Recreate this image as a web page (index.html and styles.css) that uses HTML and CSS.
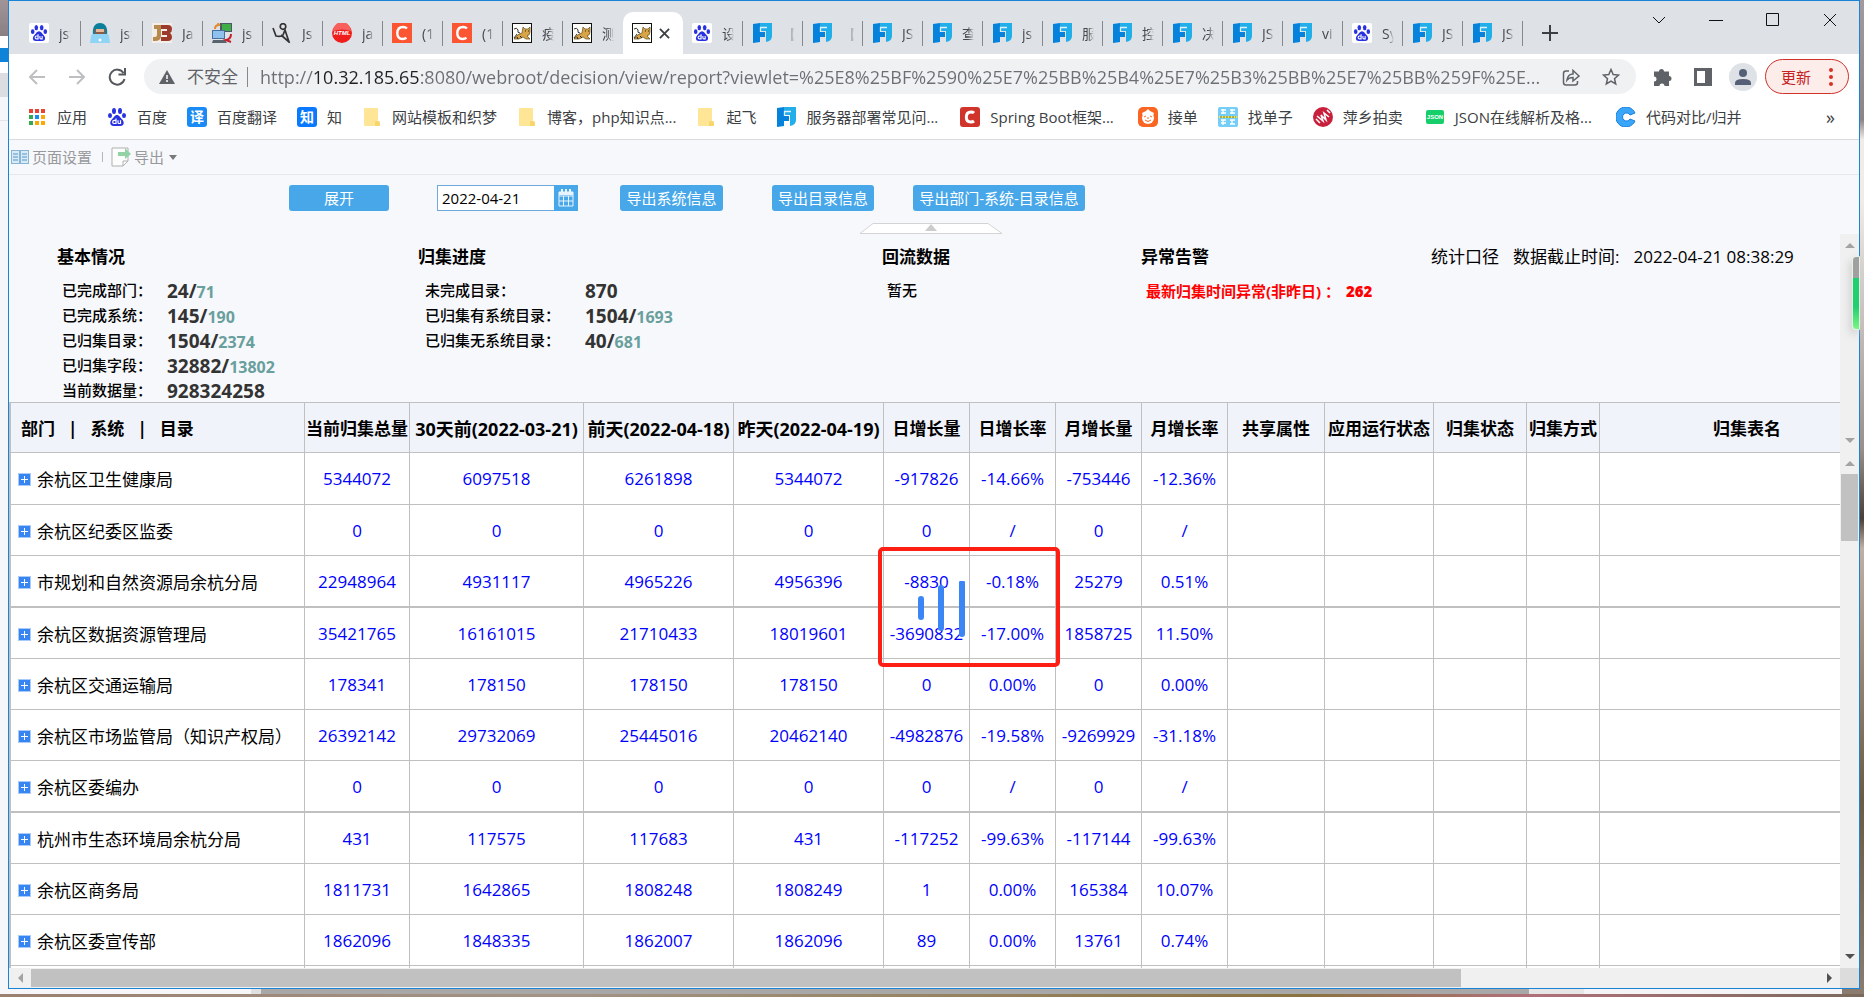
FILE: index.html
```html
<!DOCTYPE html>
<html lang="zh-CN">
<head>
<meta charset="utf-8">
<title>归集统计</title>
<link rel="stylesheet" href="styles.css">
</head>
<body>

<!-- icons -->
<svg class="sprite" aria-hidden="true">
  <symbol id="paw" viewBox="0 0 20 20">
    <g fill="#2932e1">
      <ellipse cx="7" cy="4" rx="2" ry="3"/><ellipse cx="13" cy="4" rx="2" ry="3"/>
      <ellipse cx="3" cy="8.500" rx="2" ry="2.600"/><ellipse cx="17" cy="8.500" rx="2" ry="2.600"/>
      <path d="M10 8c2.500 0 3 2.500 5 4.300 2.800 2.600 2.200 6.700-1.500 6.700h-7c-3.700 0-4.300-4.100-1.500-6.700C7 10.500 7.500 8 10 8z"/>
    </g>
    <path d="M9 11.500v5H7.300a1.300 1.300 0 0 1 0-3.200H9M11 13.300v2.200q0 1 1 1h1.500v-3.200" fill="none" stroke="#fff" stroke-width="1.200"/>
  </symbol>
  <symbol id="baidu" viewBox="0 0 20 20"><rect width="20" height="20" rx="2" fill="#fff"/><use href="#paw" x="1" y="1" width="18" height="18"/></symbol>
  <symbol id="hacker" viewBox="0 0 20 20">
    <path d="M3 12C2 4 5 0 10 0s8 4 7 12z" fill="#0d7f9c"/><path d="M5 6h10v5q-5 4-10 0z" fill="#8b5a48"/><path d="M6 6h8v3H6z" fill="#e8b795"/>
    <path d="M0 20l1-7q0-2 2-2h14q2 0 2 2l1 7z" fill="#8fd3f5"/><circle cx="10" cy="17" r="1.500" fill="#fff"/>
  </symbol>
  <symbol id="jb" viewBox="0 0 20 20"><rect width="20" height="20" fill="#f3eee9"/>
    <path d="M2 2h7v11q0 5-6 5H1v-4h2q2 0 2-2V6H2z" fill="#b98a4e"/>
    <path d="M9 2h7q4 0 4 4 0 3-2 4 2 1 2 4 0 4-4 4H9v-4h6V12h-5V8h5V6H9z" fill="#9c3a2c"/>
  </symbol>
  <symbol id="pcs" viewBox="0 0 20 20">
    <path d="M8 0h12v9H8z" fill="#4b5a66"/><path d="M10 1h9v7h-9z" fill="#3fae49"/><path d="M0 7h13v9H0z" fill="#4a6f9c"/><path d="M1 8h11v7H1z" fill="#8fc1ef"/>
    <path d="M1 17h12l2 3H0z" fill="#59636d"/><path d="M3 6q0-4 4-4l-1-2" stroke="#e28a2b" stroke-width="2" fill="none"/><path d="M19 11q0 5-5 6l5 2" stroke="#c3202b" stroke-width="2" fill="none"/>
  </symbol>
  <symbol id="runner" viewBox="0 0 20 20"><g fill="none" stroke="#333" stroke-width="1.700"><circle cx="11" cy="3.500" r="2.800"/><path d="M1 5l3 8q5 1 7-1l2-5 4 12-8-7"/></g></symbol>
  <symbol id="html" viewBox="0 0 20 20"><circle cx="10" cy="10" r="10" fill="#f01d1d"/><path d="M1 8a9 9 0 0 1 18 0q-9-3-18 0z" fill="#f7605c"/><text x="10" y="12" text-anchor="middle" class="t-html">HTML</text></symbol>
  <symbol id="csdn" viewBox="0 0 20 20"><rect width="20" height="20" fill="#fc5531"/><path d="M15 5.500q-1.500-1.500-4-1.500-5.500 0-5.700 6 0 6 5.200 6 2.500 0 4-1.200" fill="none" stroke="#fff" stroke-width="2.400"/></symbol>
  <symbol id="csdn2" viewBox="0 0 20 20"><rect width="20" height="20" rx="3" fill="#d0342a"/><path d="M14 6q-1-1-3-1-4.500 0-4.700 5 0 5 4.500 5 2 0 3.200-1" fill="none" stroke="#fff" stroke-width="3"/></symbol>
  <symbol id="tomcat" viewBox="0 0 20 20"><rect x=".5" y=".5" width="19" height="19" fill="#fdfdfa" stroke="#111"/>
    <path d="M2 16q3-5 8-6l1-6 2 2h3l2-2v5q0 3-3 4l3 3h-4l-3-2-4 2z" fill="#d8a445" stroke="#4b3510" stroke-width=".6"/>
    <path d="M2 6q3-2 4 1-1 3 2 3M5 11l-3 4" stroke="#333" fill="none"/><path d="M13 8h1M16 8h1M8 13l2 2M5 14l1 2" stroke="#222"/>
  </symbol>
  <symbol id="fr" viewBox="0 0 20 20"><path d="M1 1l7-1v9h5v5H8v5l-7 1z" fill="#0582dc"/><path d="M8 0h12v13q0 5-6 6V8H8z" fill="#22aee9"/><path d="M8.500 9V4.500H15" fill="none" stroke="#dff2fc" stroke-width="1.300"/></symbol>
  <symbol id="folder" viewBox="0 0 20 20"><path d="M2 2q0-1 1-1h12q1 0 1 1v12l2 1v3q0 1-1 1H3q-1 0-1-1z" fill="#ffe596"/><path d="M13 19v-4q0-1 1-1h2q2 0 2 2v2q0 1-1 1z" fill="#f8d66d"/></symbol>
  <symbol id="apps" viewBox="0 0 20 20">
    <path d="M2 2h4v4H2zM8 2h4v4H8zM14 2h4v4h-4z" fill="#ea4335"/><path d="M2 8h4v4H2zM2 14h4v4H2z" fill="#34a853"/>
    <path d="M8 8h4v4H8z" fill="#1a8cf0"/><path d="M14 8h4v4h-4zM8 14h4v4H8zM14 14h4v4h-4z" fill="#fbaa05"/>
  </symbol>
  <symbol id="yi" viewBox="0 0 20 20"><rect width="20" height="20" rx="3" fill="#1a8bf5"/><text x="10" y="15" text-anchor="middle" class="t-cjk">译</text></symbol>
  <symbol id="zhi" viewBox="0 0 20 20"><rect width="20" height="20" rx="3" fill="#0a79ff"/><text x="10" y="15" text-anchor="middle" class="t-cjk">知</text></symbol>
  <symbol id="pig" viewBox="0 0 20 20"><rect width="20" height="20" rx="5" fill="#fb6522"/><circle cx="10" cy="11" r="6" fill="#fff"/><path d="M4 6l4-2 2-2 2 2 4 2-1 3H5z" fill="#fff"/><path d="M6 10l2-1M12 9l2 1M7 13q3 3 6 0M9 11h2" stroke="#fb6522" fill="none"/></symbol>
  <symbol id="city" viewBox="0 0 20 20"><rect width="20" height="20" rx="2" fill="#76cdf5"/><path d="M3 3h5M5 2v5M3 6h5M12 3h5M14 2v5M12 6h5M3 13h5M3 16h5M5 13v5M12 13h5M12 17h5M14 13v4" stroke="#fff" stroke-width="1.300"/><path d="M1 9h18v2H1z" fill="#f5e24c"/><path d="M2 10h16" stroke="#5b7d52" stroke-dasharray="2 1"/></symbol>
  <symbol id="px" viewBox="0 0 20 20"><circle cx="10" cy="10" r="10" fill="#c8203c"/><path d="M3 12l4 4M4 9l6 5-2-6 5 5-2-7 5 4M14 3l3 3" stroke="#fff" stroke-width="1.500" fill="none"/></symbol>
  <symbol id="json" viewBox="0 0 20 20"><rect x="1" y="3" width="18" height="14" rx="2" fill="#16cf6a"/><text x="10" y="12" text-anchor="middle" class="t-json">JSON</text></symbol>
  <symbol id="cc" viewBox="0 0 20 20"><path d="M19 6A10 10 0 1 0 19 14L14 12a4 4 0 1 1 0-4z" fill="#3aa6fb" stroke="#1b7fd6"/></symbol>
</svg>

<div class="window">

  <div class="tabstrip">
    <div class="tabs" role="tablist">
      <button class="tab first" role="tab"><svg class="ico"><use href="#baidu"/></svg><span>jsf</span></button>
      <button class="tab second" role="tab"><svg class="ico"><use href="#hacker"/></svg><span>jsf</span></button>
      <button class="tab" role="tab"><svg class="ico"><use href="#jb"/></svg><span>Ja</span></button>
      <button class="tab" role="tab"><svg class="ico"><use href="#pcs"/></svg><span>js</span></button>
      <button class="tab" role="tab"><svg class="ico"><use href="#runner"/></svg><span>Js</span></button>
      <button class="tab" role="tab"><svg class="ico"><use href="#html"/></svg><span>ja</span></button>
      <button class="tab" role="tab"><svg class="ico"><use href="#csdn"/></svg><span>(1</span></button>
      <button class="tab" role="tab"><svg class="ico"><use href="#csdn"/></svg><span>(1</span></button>
      <button class="tab" role="tab"><svg class="ico"><use href="#tomcat"/></svg><span>疫</span></button>
      <button class="tab noline" role="tab"><svg class="ico"><use href="#tomcat"/></svg><span>测</span></button>
      <button class="tab active" role="tab" aria-selected="true" aria-label="report"><svg class="ico"><use href="#tomcat"/></svg><svg class="x" viewBox="0 0 12 12"><path d="M1 1l10 10M11 1L1 11"/></svg></button>
      <button class="tab" role="tab"><svg class="ico"><use href="#baidu"/></svg><span>设</span></button>
      <button class="tab" role="tab"><svg class="ico"><use href="#fr"/></svg><span>【</span></button>
      <button class="tab" role="tab"><svg class="ico"><use href="#fr"/></svg><span>【</span></button>
      <button class="tab" role="tab"><svg class="ico"><use href="#fr"/></svg><span>JS</span></button>
      <button class="tab" role="tab"><svg class="ico"><use href="#fr"/></svg><span>查</span></button>
      <button class="tab" role="tab"><svg class="ico"><use href="#fr"/></svg><span>js</span></button>
      <button class="tab" role="tab"><svg class="ico"><use href="#fr"/></svg><span>服</span></button>
      <button class="tab" role="tab"><svg class="ico"><use href="#fr"/></svg><span>控</span></button>
      <button class="tab" role="tab"><svg class="ico"><use href="#fr"/></svg><span>决</span></button>
      <button class="tab" role="tab"><svg class="ico"><use href="#fr"/></svg><span>JS</span></button>
      <button class="tab" role="tab"><svg class="ico"><use href="#fr"/></svg><span>vi</span></button>
      <button class="tab" role="tab"><svg class="ico"><use href="#baidu"/></svg><span>Sy</span></button>
      <button class="tab" role="tab"><svg class="ico"><use href="#fr"/></svg><span>JS</span></button>
      <button class="tab" role="tab"><svg class="ico"><use href="#fr"/></svg><span>JS</span></button>
    </div>
    <button class="newtab" aria-label="新标签页"><svg viewBox="0 0 16 16"><path d="M8 0v16M0 8h16"/></svg></button>
    <div class="winbtns">
      <button aria-label="搜索标签页"><svg viewBox="0 0 14 14"><path d="M1 4l6 6 6-6"/></svg></button>
      <button aria-label="最小化"><svg viewBox="0 0 14 14"><path d="M0 7.500h14"/></svg></button>
      <button aria-label="最大化"><svg viewBox="0 0 14 14"><path d="M.5.5h12v12H.5z"/></svg></button>
      <button aria-label="关闭"><svg viewBox="0 0 14 14"><path d="M1 1l12 12M13 1L1 13"/></svg></button>
    </div>
  </div>

  <div class="toolbar">
    <button class="nav off" aria-label="后退"><svg viewBox="0 0 18 18"><path d="M17 9H2M9 2L2 9l7 7"/></svg></button>
    <button class="nav off" aria-label="前进"><svg viewBox="0 0 18 18"><path d="M1 9h15M9 2l7 7-7 7"/></svg></button>
    <button class="nav" aria-label="刷新"><svg viewBox="0 0 18 18"><path d="M15.500 5A7.500 7.500 0 1 0 16.500 11M10.500 6.500H17V0"/></svg></button>
    <div class="omnibox">
      <svg class="warn" viewBox="0 0 16 16"><path d="M8 1l8 14H0z" fill="#5f6368"/><path d="M8 6v4M8 11v2" stroke="#fff" stroke-width="1.500"/></svg>
      <label for="url">不安全</label>
      <input id="url" class="url" type="text" value="http://10.32.185.65:8080/webroot/decision/view/report?viewlet=%25E8%25BF%2590%25E7%25BB%25B4%25E7%25B3%25BB%25E7%25BB%259F%25E...">
      <button aria-label="分享"><svg viewBox="0 0 18 18"><path d="M7 3H4Q1.500 3 1.500 5.500v9Q1.500 17 4 17h9q2.500 0 2.500-2.500V13M5 12q1-6 6-6V2.500L17 8l-6 5V9.500q-4 0-6 2.500z"/></svg></button>
      <button aria-label="收藏"><svg viewBox="0 0 18 18"><path d="M9 1.500l2.200 5 5.300.5-4 3.700 1.200 5.300L9 13.200 4.300 16l1.200-5.300-4-3.700 5.300-.5z"/></svg></button>
    </div>
    <button class="ext" aria-label="扩展程序"><svg viewBox="0 0 18 18"><path d="M5 3.500a2.500 2.500 0 0 1 5 0h5V8a2.500 2.500 0 0 1 0 5v5h-4.500a2.500 2.500 0 0 0-5 0H0v-4.500a2.500 2.500 0 0 0 0-5v-5z" fill="#5f6368"/></svg></button>
    <button class="ext" aria-label="侧边栏"><svg viewBox="0 0 18 18"><path d="M0 0h18v18H0zM3 3v12h8V3z" fill="#5f6368" fill-rule="evenodd"/></svg></button>
    <button class="avatar" aria-label="用户"><svg viewBox="0 0 28 28"><circle cx="14" cy="14" r="14" fill="#dee1e6"/><circle cx="14" cy="10" r="4" fill="#546075"/><path d="M6 22v-2q0-4 8-4t8 4v2z" fill="#546075"/></svg></button>
    <button class="update">更新<svg viewBox="0 0 4 18"><circle cx="2" cy="2" r="2"/><circle cx="2" cy="9" r="2"/><circle cx="2" cy="16" r="2"/></svg></button>
  </div>

  <nav class="bookmarks">
    <a href="#"><svg class="ico"><use href="#apps"/></svg>应用</a>
    <a href="#"><svg class="ico"><use href="#paw"/></svg>百度</a>
    <a href="#"><svg class="ico"><use href="#yi"/></svg>百度翻译</a>
    <a href="#"><svg class="ico"><use href="#zhi"/></svg>知</a>
    <a href="#"><svg class="ico"><use href="#folder"/></svg>网站模板和织梦</a>
    <a href="#"><svg class="ico"><use href="#folder"/></svg>博客，php知识点...</a>
    <a href="#"><svg class="ico"><use href="#folder"/></svg>起飞</a>
    <a href="#"><svg class="ico"><use href="#fr"/></svg>服务器部署常见问...</a>
    <a href="#" class="long"><svg class="ico"><use href="#csdn2"/></svg>Spring Boot框架...</a>
    <a href="#"><svg class="ico"><use href="#pig"/></svg>接单</a>
    <a href="#"><svg class="ico"><use href="#city"/></svg>找单子</a>
    <a href="#"><svg class="ico"><use href="#px"/></svg>萍乡拍卖</a>
    <a href="#" class="long"><svg class="ico"><use href="#json"/></svg>JSON在线解析及格...</a>
    <a href="#"><svg class="ico"><use href="#cc"/></svg>代码对比/归并</a>
    <button class="more" aria-label="更多书签">»</button>
  </nav>

  <div class="fr-toolbar">
    <button><svg viewBox="0 0 18 16"><rect x=".5" y="1.500" width="17" height="13" fill="#d8eaf6" stroke="#8ab4d4"/><path d="M9 1v14" stroke="#8ab4d4" stroke-width="2"/><path d="M2 5h5M2 8h5M2 11h5M11 5h5M11 8h5M11 11h5" stroke="#7fb2d8" stroke-width="1.500"/></svg>页面设置</button>
    <span class="split"></span>
    <button><svg class="big" viewBox="0 0 20 20"><path d="M1 1h16v13l-5 5H1z" fill="#fdfdfd" stroke="#b0b0b0"/><path d="M17 14h-5v5" fill="none" stroke="#b0b0b0"/><path d="M7 5h7V1l6 6-6 5V9H7z" fill="#92d2a4"/></svg>导出<i class="caret"></i></button>
  </div>

  <form class="params">
    <button type="button" class="btn expand">展开</button>
    <div class="datebox">
      <input type="text" value="2022-04-21" aria-label="日期">
      <button type="button" aria-label="选择日期"><svg viewBox="0 0 16 18"><path d="M1 3h14v14H1zM1 7h14M1 12h14M5.500 7v10M10.500 7v10" fill="none" stroke="#e8f4fd"/><path d="M1 3h14v3H1z" fill="#e8f4fd"/><path d="M4 0v4M8 0v4M12 0v4" stroke="#e8f4fd" stroke-width="2"/></svg></button>
    </div>
    <button type="button" class="btn exp-sys">导出系统信息</button>
    <button type="button" class="btn exp-dir">导出目录信息</button>
    <button type="button" class="btn exp-all">导出部门-系统-目录信息</button>
    <button type="button" class="fold" aria-label="收起"><svg viewBox="0 0 144 11"><path d="M1 10.500L14 .5h115l14 10z" fill="#fff" stroke="#d4d4d4"/><path d="M66 8l6-7 6 7z" fill="#ccc"/></svg></button>
  </form>

  <div class="report">
    <div class="summary">
      <section>
        <h2>基本情况</h2>
        <dl>
          <dt>已完成部门：</dt><dd>24/<small>71</small></dd>
          <dt>已完成系统：</dt><dd>145/<small>190</small></dd>
          <dt>已归集目录：</dt><dd>1504/<small>2374</small></dd>
          <dt>已归集字段：</dt><dd>32882/<small>13802</small></dd>
          <dt>当前数据量：</dt><dd>928324258</dd>
        </dl>
      </section>
      <section class="wide">
        <h2>归集进度</h2>
        <dl>
          <dt>未完成目录：</dt><dd>870</dd>
          <dt>已归集有系统目录：</dt><dd>1504/<small>1693</small></dd>
          <dt>已归集无系统目录：</dt><dd>40/<small>681</small></dd>
        </dl>
      </section>
      <section>
        <h2>回流数据</h2>
        <p>暂无</p>
      </section>
      <section>
        <h2>异常告警</h2>
        <p class="alarm">最新归集时间异常(非昨日) ： <b>262</b></p>
      </section>
      <div class="asof"><span>统计口径</span><span>数据截止时间:</span><span>2022-04-21 08:38:29</span></div>
    </div>

    <div class="gridwrap">
      <table>
        <colgroup>
          <col class="c-name"><col class="c-total"><col class="c-30"><col class="c-day"><col class="c-day">
          <col class="c-inc"><col class="c-inc"><col class="c-inc"><col class="c-inc">
          <col class="c-share"><col class="c-run"><col class="c-state"><col class="c-way"><col>
        </colgroup>
        <thead>
          <tr><th class="name">部门<i>|</i>系统<i>|</i>目录</th><th>当前归集总量</th><th class="date">30天前(2022-03-21)</th><th class="date">前天(2022-04-18)</th><th class="date">昨天(2022-04-19)</th><th>日增长量</th><th>日增长率</th><th>月增长量</th><th>月增长率</th><th>共享属性</th><th>应用运行状态</th><th>归集状态</th><th>归集方式</th><th>归集表名</th></tr>
        </thead>
        <tbody>
          <tr class="tall"><td class="name"><button class="plus" aria-label="展开"></button>余杭区卫生健康局</td><td>5344072</td><td>6097518</td><td>6261898</td><td>5344072</td><td>-917826</td><td>-14.66%</td><td>-753446</td><td>-12.36%</td><td></td><td></td><td></td><td></td><td></td></tr>
          <tr><td class="name"><button class="plus" aria-label="展开"></button>余杭区纪委区监委</td><td>0</td><td>0</td><td>0</td><td>0</td><td>0</td><td>/</td><td>0</td><td>/</td><td></td><td></td><td></td><td></td><td></td></tr>
          <tr class="tall thick"><td class="name"><button class="plus" aria-label="展开"></button>市规划和自然资源局余杭分局</td><td>22948964</td><td>4931117</td><td>4965226</td><td>4956396</td><td>-8830</td><td>-0.18%</td><td>25279</td><td>0.51%</td><td></td><td></td><td></td><td></td><td></td></tr>
          <tr><td class="name"><button class="plus" aria-label="展开"></button>余杭区数据资源管理局</td><td>35421765</td><td>16161015</td><td>21710433</td><td>18019601</td><td>-3690832</td><td>-17.00%</td><td>1858725</td><td>11.50%</td><td></td><td></td><td></td><td></td><td></td></tr>
          <tr><td class="name"><button class="plus" aria-label="展开"></button>余杭区交通运输局</td><td>178341</td><td>178150</td><td>178150</td><td>178150</td><td>0</td><td>0.00%</td><td>0</td><td>0.00%</td><td></td><td></td><td></td><td></td><td></td></tr>
          <tr><td class="name"><button class="plus" aria-label="展开"></button>余杭区市场监管局（知识产权局）</td><td>26392142</td><td>29732069</td><td>25445016</td><td>20462140</td><td>-4982876</td><td>-19.58%</td><td>-9269929</td><td>-31.18%</td><td></td><td></td><td></td><td></td><td></td></tr>
          <tr class="tall thick"><td class="name"><button class="plus" aria-label="展开"></button>余杭区委编办</td><td>0</td><td>0</td><td>0</td><td>0</td><td>0</td><td>/</td><td>0</td><td>/</td><td></td><td></td><td></td><td></td><td></td></tr>
          <tr><td class="name"><button class="plus" aria-label="展开"></button>杭州市生态环境局余杭分局</td><td>431</td><td>117575</td><td>117683</td><td>431</td><td>-117252</td><td>-99.63%</td><td>-117144</td><td>-99.63%</td><td></td><td></td><td></td><td></td><td></td></tr>
          <tr><td class="name"><button class="plus" aria-label="展开"></button>余杭区商务局</td><td>1811731</td><td>1642865</td><td>1808248</td><td>1808249</td><td>1</td><td>0.00%</td><td>165384</td><td>10.07%</td><td></td><td></td><td></td><td></td><td></td></tr>
          <tr><td class="name"><button class="plus" aria-label="展开"></button>余杭区委宣传部</td><td>1862096</td><td>1848335</td><td>1862007</td><td>1862096</td><td>89</td><td>0.00%</td><td>13761</td><td>0.74%</td><td></td><td></td><td></td><td></td><td></td></tr>
          <tr><td class="name"></td><td></td><td></td><td></td><td></td><td></td><td></td><td></td><td></td><td></td><td></td><td></td><td></td><td></td></tr>
        </tbody>
      </table>
      <div class="marker"></div>
      <svg class="loading" viewBox="0 0 48 58"><path d="M4 18v18M24 7v40M45 2v51"/></svg>
    </div>

    <div class="vbar head-bar"><i class="up"></i><i class="down"></i></div>
    <div class="vbar body-bar"><i class="up"></i><b></b><i class="down dark"></i></div>
    <div class="hbar"><i class="left"></i><div class="track"><b></b></div><i class="right"></i></div>
    <div class="corner"></div>
    <div class="floater"></div>
  </div>
</div>

</body>
</html>
```
FILE: styles.css
```css
*{
  box-sizing: border-box;
}

body{
  margin: 0;
  height: 100vh;
  padding: 0 4px 8px 8px;
  overflow: hidden;
  font-family: "Open Sans", "Noto Sans CJK SC", sans-serif;
  font-size: 17px;
  color: #000;
  /* whatever sits behind the window */
  background:
    linear-gradient(90deg, #9a8070, #a39486 30%, #8a7340 70%, #b0707a 82%, #7a6a5c) bottom / 100% 3px no-repeat,
    linear-gradient(90deg, #f6f6f8 251px, #e0e0e0 251px 261px, #a8a8a8 261px 83%, #e6e6e6 83% 86%, #f4f4f6 86%) left bottom / calc(100% - 22px) 8px no-repeat,
    linear-gradient(#a09498, #8a8084 36px, #fff 36px 48px, #0f83d8 48px 62px, #fff 62px 73px, #dcdde0 73px 97px, #f5f6f9 97px 120px, #e4e4e8 120px 121px, #f5f6f9 121px) left / 8px 100% no-repeat,
    linear-gradient(#a39aa0, #8d8488 12%, #f0ece8 14% 20%, #9a8f8a 45%, #4a4038 52%, #c0b0a4 55%, #6b5a44 80%, #8a7d70);
}

button{
  border: none;
  background: none;
  padding: 0;
  font-family: inherit;
  color: inherit;
}

svg{
  display: block;
  fill: none;
}

.sprite{
  display: none;
}
.t-html{
  font: italic bold 6px "Liberation Sans", sans-serif;
  fill: #fff;
}
.t-json{
  font: bold 6px "Liberation Sans", sans-serif;
  fill: #fff;
}
.t-cjk{
  font: bold 14px "Noto Sans CJK SC", sans-serif;
  fill: #fff;
}

.ico{
  width: 20px;
  height: 20px;
  flex: none;
}

.window{
  height: 100%;
  display: flex;
  flex-direction: column;
  border: 1px solid #1883d7;
  background: #f7f8fb;
}

/* tabs */
.tabstrip{
  height: 53px;
  display: flex;
  align-items: flex-end;
  background: #dee1e6;
  padding-left: 11px;
}
.tabs{
  display: flex;
  flex: none;
}
.tab{
  position: relative;
  width: 60px;
  height: 42px;
  display: flex;
  align-items: center;
  gap: 10px;
  padding-left: 9px;
  font-size: 14px;
  color: #45494d;
}
.tab.first{
  width: 61px;
}
.tab.second{
  width: 62px;
}
.tab span{
  width: 12px;
  overflow: hidden;
  white-space: nowrap;
  text-align: left;
  -webkit-mask-image: linear-gradient(90deg, #000 50%, transparent);
}
.tab::after{
  content: "";
  position: absolute;
  right: 0;
  top: 9px;
  width: 1px;
  height: 25px;
  background: #85898f;
}
.tab.noline::after, .tab.active::after{
  display: none;
}
.tab.active{
  background: #fff;
  border-radius: 10px 10px 0 0;
  gap: 7px;
}
.tab .x{
  width: 11px;
  height: 11px;
  stroke: #3c4043;
  stroke-width: 2;
}
.newtab{
  width: 54px;
  height: 42px;
  display: grid;
  place-items: center;
}
.newtab svg{
  width: 16px;
  height: 16px;
  stroke: #3c4043;
  stroke-width: 2;
}
.winbtns{
  margin-left: auto;
  align-self: flex-start;
  display: flex;
  padding-right: 1px;
}
.winbtns button{
  width: 57px;
  height: 38px;
  display: grid;
  place-items: center;
}
.winbtns svg{
  width: 14px;
  height: 14px;
  stroke: #111;
}

/* address bar */
.toolbar{
  height: 45px;
  background: #fff;
  display: flex;
  align-items: center;
  padding: 0 10px 0 8px;
}
.nav{
  width: 40px;
  height: 35px;
  display: grid;
  place-items: center;
}
.nav svg{
  width: 18px;
  height: 18px;
  stroke: #55585d;
  stroke-width: 2;
}
.nav.off svg{
  stroke: #bdbfc2;
}
.omnibox{
  flex: 1;
  height: 35px;
  margin: 0 7px;
  padding: 0 5px 0 15px;
  background: #eff1f3;
  border-radius: 18px;
  display: flex;
  align-items: center;
  color: #5f6368;
}
.warn{
  width: 16px;
  height: 16px;
}
.omnibox label{
  padding: 0 9px 0 12px;
  line-height: 20px;
  border-right: 1px solid #85898f;
}
.url{
  flex: 1;
  min-width: 0;
  margin-left: 12px;
  padding: 0;
  border: none;
  outline: none;
  font: 18px "Open Sans", sans-serif;
  color: transparent;
  /* host is darker than the rest */
  background: linear-gradient(90deg, #6b6f74 54px, #202124 54px 160px, #6b6f74 160px);
  -webkit-background-clip: text;
  background-clip: text;
}
.omnibox button{
  width: 40px;
  height: 35px;
  display: grid;
  place-items: center;
}
.omnibox button svg{
  width: 18px;
  height: 18px;
  stroke: #5f6368;
  stroke-width: 1.5;
}
.ext{
  width: 40px;
  display: grid;
  place-items: center;
}
.ext svg{
  width: 18px;
  height: 18px;
}
.avatar{
  margin: 0 8px 0 6px;
}
.avatar svg{
  width: 28px;
  height: 28px;
}
.update{
  width: 84px;
  height: 35px;
  border: 1px solid #d0312a;
  border-radius: 18px;
  background: #fcecea;
  color: #c5221f;
  font-size: 15px;
  display: flex;
  align-items: center;
  justify-content: center;
  gap: 18px;
}
.update svg{
  width: 4px;
  height: 18px;
  fill: #d93025;
}

.bookmarks{
  height: 41px;
  display: flex;
  align-items: center;
  background: #fff;
  border-bottom: 1px solid #d9dbdf;
  padding: 0 8px 4px;
}
.bookmarks a{
  display: flex;
  align-items: center;
  gap: 10px;
  padding: 0 10px;
  font-size: 15px;
  line-height: 20px;
  color: #3c4043;
  text-decoration: none;
  white-space: nowrap;
}
.bookmarks .long{
  padding: 0 14px 0 12px;
}
.more{
  margin-left: auto;
  padding-right: 16px;
  font-size: 18px;
  color: #3c4043;
}

/* report toolbar */
.fr-toolbar{
  height: 35px;
  display: flex;
  align-items: center;
  border-bottom: 1px solid #e6e8ea;
  padding-left: 2px;
}
.fr-toolbar button{
  display: flex;
  align-items: center;
  gap: 3px;
  font-size: 15px;
  line-height: 20px;
  color: #97999c;
}
.fr-toolbar svg{
  width: 18px;
  height: 16px;
}
.fr-toolbar svg.big{
  width: 20px;
  height: 20px;
}
.split{
  width: 1px;
  height: 10px;
  margin: 0 8px 0 10px;
  background: #b4b6b8;
}
.caret{
  border: 4px solid transparent;
  border-top: 5px solid #77797b;
  border-bottom: none;
  margin-left: 2px;
}

.params{
  position: relative;
  height: 59px;
  display: flex;
  align-items: flex-start;
  padding: 10px 0 0 280px;
}
.btn{
  height: 26px;
  border-radius: 3px;
  background: #48a7e9;
  color: #fff;
  font-size: 15px;
  line-height: 26px;
  white-space: nowrap;
}
.expand{
  width: 100px;
  margin-right: 48px;
}
.exp-sys{
  width: 103px;
  margin: 0 49px 0 42px;
}
.exp-dir{
  width: 102px;
  margin-right: 39px;
}
.exp-all{
  width: 172px;
}
.datebox{
  display: flex;
  width: 141px;
  height: 26px;
}
.datebox input{
  width: 117px;
  border: 1px solid #6fa8dc;
  border-right: none;
  padding: 0 4px;
  font: 15px "Open Sans", sans-serif;
  outline: none;
}
.datebox button{
  width: 24px;
  background: #48a7e9;
  display: grid;
  place-items: center;
}
.datebox svg{
  width: 16px;
  height: 18px;
}
.fold{
  position: absolute;
  left: 50%;
  bottom: 0;
  width: 144px;
  margin-left: -75px;
}

/* report body: content + scroll bars */
.report{
  flex: 1;
  min-height: 0;
  position: relative;
  display: grid;
  grid-template-columns: minmax(0, 1fr) 19px;
  grid-template-rows: 168px 50px minmax(0, 1fr) 20px;
}
.summary{
  display: grid;
  grid-template-columns: 361px 464px 259px 290px 1fr;
  padding: 10px 0 0 48px;
  white-space: nowrap;
}
.summary h2{
  margin: 0 0 8px;
  font-size: 17px;
  line-height: 26px;
}
dl{
  margin: 0;
  padding-left: 5px;
  display: grid;
  grid-template-columns: 105px auto;
  grid-auto-rows: 25px;
}
.wide dl{
  padding-left: 7px;
  grid-template-columns: 160px auto;
}
dt, .summary p{
  font-size: 15px;
  line-height: 24px;
  font-weight: 500;
}
dd{
  margin: 0;
  font-size: 19px;
  line-height: 26px;
  font-weight: bold;
  color: #333;
}
dd small{
  font-size: 16px;
  color: #699f9d;
}
.summary p{
  margin: 0;
  padding-left: 5px;
}
.summary .alarm{
  color: #f00;
  font-weight: bold;
  line-height: 26px;
}
.alarm b{
  margin-left: 2px;
}
.asof{
  display: flex;
  gap: 14px;
  line-height: 26px;
}

.gridwrap{
  grid-column: 1;
  grid-row: 2 / 4;
  position: relative;
  overflow: hidden;
  background: #fff;
}
table{
  width: 100%;
  table-layout: fixed;
  border-collapse: separate;
  border-spacing: 0;
  border-left: 2px solid #c0c0c0;
}
.c-name{ width: 294px; }
.c-total{ width: 105px; }
.c-30{ width: 174px; }
.c-day{ width: 150px; }
.c-inc{ width: 86px; }
.c-share{ width: 97px; }
.c-run{ width: 109px; }
.c-state{ width: 93px; }
.c-way{ width: 73px; }
th, td{
  padding: 0;
  height: 51px;
  text-align: center;
  white-space: nowrap;
  border-right: 1px solid #c0c0c0;
  border-bottom: 1px solid #c0c0c0;
}
th:last-child, td:last-child{
  border-right: none;
}
th{
  background: #f0f3f9;
  border-top: 1px solid #c0c0c0;
}
/* last column runs on past the scroll bar */
th:last-child{
  padding-left: 54px;
}
th.date{
  font-size: 18px;
}
th i{
  font-style: normal;
  margin: 0 13px;
}
td{
  color: #00f;
}
.tall td{
  height: 52px;
}
.thick td{
  border-bottom-width: 2px;
}
th.name{
  text-align: left;
  padding-left: 10px;
}
td.name{
  text-align: left;
  padding-left: 8px;
  color: #000;
}
.plus{
  width: 11px;
  height: 11px;
  margin-right: 7px;
  vertical-align: 1px;
  outline: 1px solid #a9cbf8;
  background:
    linear-gradient(#fff, #fff) center / 7px 1px no-repeat,
    linear-gradient(#fff, #fff) center / 1px 7px no-repeat,
    #3685f2;
}

/* red box and the loading bars drawn over the cells */
.marker{
  position: absolute;
  left: 869px;
  top: 145px;
  width: 182px;
  height: 120px;
  border: 4px solid #fe1f14;
  border-radius: 5px;
}
.loading{
  position: absolute;
  left: 908px;
  top: 179px;
  width: 48px;
  height: 58px;
  stroke: #3b86f4;
  stroke-width: 6;
  stroke-linecap: round;
}

.vbar{
  grid-column: 2;
  background: #f0f0f0;
  display: flex;
  flex-direction: column;
  align-items: center;
  padding: 9px 0;
}
.head-bar{
  grid-row: 1 / 3;
}
.body-bar{
  grid-row: 3;
}
.vbar b{
  width: 17px;
  height: 67px;
  margin-top: 8px;
  background: #c1c1c1;
}
.up, .down, .left, .right{
  border: 5px solid transparent;
}
.up{
  border-top: none;
  border-bottom-color: #a3a3a3;
}
.down{
  margin-top: auto;
  border-bottom: none;
  border-top-color: #a3a3a3;
}
.dark{
  border-top-color: #505050;
}
.hbar{
  grid-row: 4;
  background: #f0f0f0;
  display: flex;
  align-items: center;
  padding: 0 8px 0 9px;
}
.left{
  border-left: none;
  border-right-color: #a3a3a3;
}
.right{
  border-right: none;
  border-left-color: #505050;
}
.track{
  flex: 1;
  padding: 0 8px;
}
.track b{
  display: block;
  width: 80%;
  height: 18px;
  background: #c1c1c1;
}
.corner{
  background: #dcdcdc;
}
.floater{
  position: absolute;
  right: -1px;
  top: 22px;
  width: 8px;
  height: 74px;
  border: 1px solid #e4f3e8;
  border-radius: 4px 0 0 4px;
  background: linear-gradient(#a0a0a0 21px, #20d070 21px 50px, #7cf582);
  box-shadow: -2px 4px 8px #ccc;
}
```
